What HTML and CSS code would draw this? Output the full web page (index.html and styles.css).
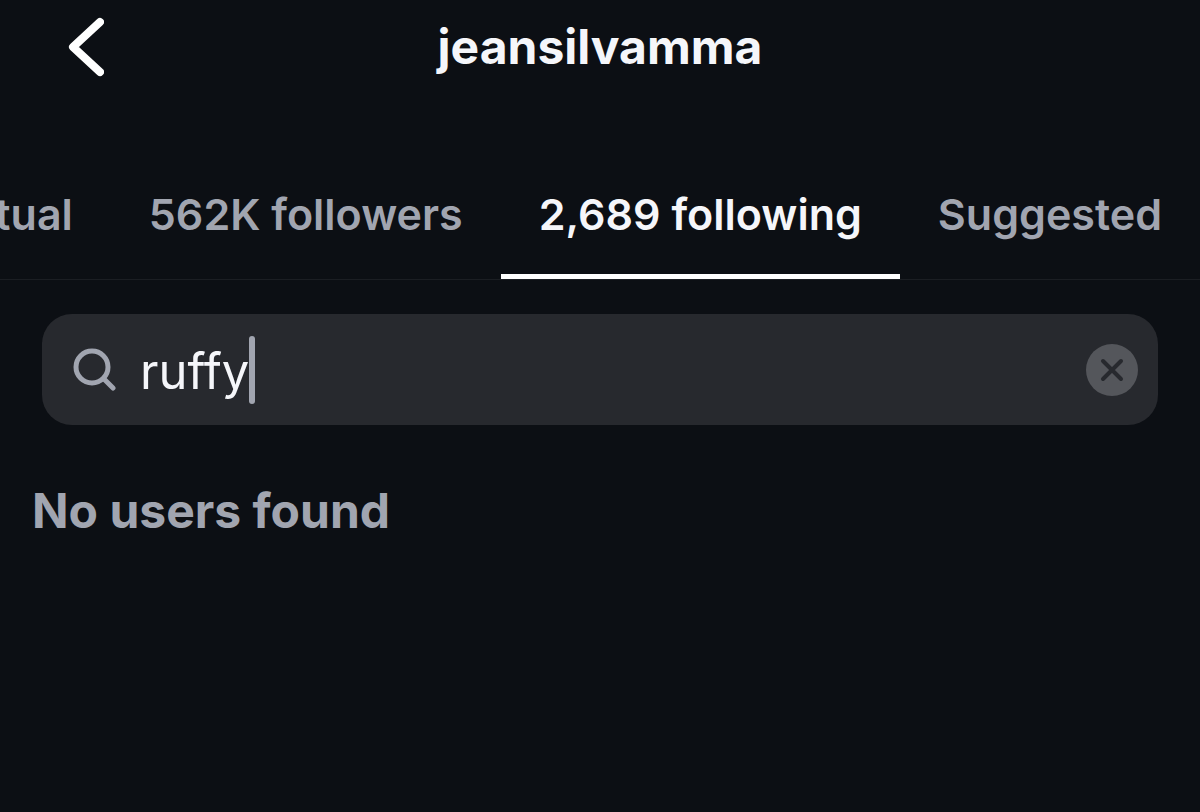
FILE: index.html
```html
<!DOCTYPE html>
<html lang="en">
<head>
<meta charset="UTF-8" />
<meta name="viewport" content="width=device-width, initial-scale=1" />
<title>jeansilvamma</title>
<link rel="stylesheet" href="styles.css">
</head>
<body>
  <header class="topbar">
    <button class="back" type="button" aria-label="Back">
      <svg width="40" height="64" viewBox="0 0 40 64" fill="none" stroke="currentColor" stroke-width="8" stroke-linecap="round" stroke-linejoin="round"><path d="M36 7 9 32 36 57"/></svg>
    </button>
    <h1 class="username">jeansilvamma</h1>
  </header>

  <nav class="tabs">
    <a class="tab" href="#mutual">Mutual</a>
    <a class="tab" href="#followers">562K followers</a>
    <a class="tab active" href="#following" aria-current="page">2,689 following</a>
    <a class="tab" href="#suggested">Suggested</a>
  </nav>

  <main class="content">
    <form class="search" role="search">
      <label class="search-label" for="q" aria-label="Search">
        <svg width="44" height="44" viewBox="0 0 44 44" fill="none" stroke="currentColor" stroke-width="5" stroke-linecap="round"><circle cx="20" cy="19" r="16"/><path d="M32 31 41 40"/></svg>
      </label>
      <input class="search-input" id="q" type="text" value="ruffy" size="4" autocomplete="off" spellcheck="false">
      <span class="caret"></span>
      <button class="clear" type="reset" aria-label="Clear search">
        <svg width="24" height="24" viewBox="0 0 24 24" fill="none" stroke="currentColor" stroke-width="4" stroke-linecap="round"><path d="M3 3 21 21M21 3 3 21"/></svg>
      </button>
    </form>
    <p class="empty">No users found</p>
  </main>
</body>
</html>
```

FILE: styles.css
```css
:root{
  --bg:#0c0f14;
  --field:#27292e;
  --line:#1b1e23;
  --text:#f5f6fa;
  --muted:#a1a5b0;
}
*{box-sizing:border-box}
body{
  margin:0;
  min-height:100vh;
  background:var(--bg);
  color:var(--text);
  font-family:Inter, "Liberation Sans", sans-serif;
}
button{
  border:0;
  padding:0;
  background:none;
  color:inherit;
  cursor:pointer;
}
svg{display:block}

/* Header */
.topbar{
  display:grid;
  grid-template-columns:40px 1fr 40px;
  align-items:center;
  height:94px;
  padding:0 64px;
}
.back{color:#fff}
.username{
  margin:0;
  text-align:center;
  font-size:48px;
  line-height:60px;
  font-weight:700;
}

/* Tabs: the row is scrolled to its end */
.tabs{
  display:flex;
  justify-content:flex-end;
  margin-top:66px;
  overflow:hidden;
  border-bottom:1px solid var(--line);
}
.tab{
  flex:none;
  padding:24px 38px 30px;
  border-bottom:5px solid transparent;
  color:var(--muted);
  font-size:43px;
  line-height:60px;
  font-weight:600;
  text-decoration:none;
  white-space:nowrap;
}
.tab.active{
  color:var(--text);
  border-bottom-color:#fff;
}

/* Search */
.content{padding:34px 42px}
.search{
  display:flex;
  align-items:center;
  height:111px;
  padding:0 20px 0 30px;
  border-radius:30px;
  background:var(--field);
}
.search-label{color:var(--muted)}
.search-input{
  field-sizing:content;
  margin-left:24px;
  padding:4px 0 0;
  border:0;
  outline:0;
  background:none;
  color:var(--text);
  font:400 49px/60px Inter, "Liberation Sans", sans-serif;
}
.caret{
  width:6px;
  height:68px;
  border-radius:3px;
  background:var(--muted);
}
.clear{
  display:grid;
  place-items:center;
  width:52px;
  height:52px;
  margin-left:auto;
  border-radius:50%;
  background:#54565b;
  color:var(--field);
}
.empty{
  margin:56px -10px 0;
  color:var(--muted);
  font-size:48px;
  line-height:60px;
  font-weight:700;
}
```
